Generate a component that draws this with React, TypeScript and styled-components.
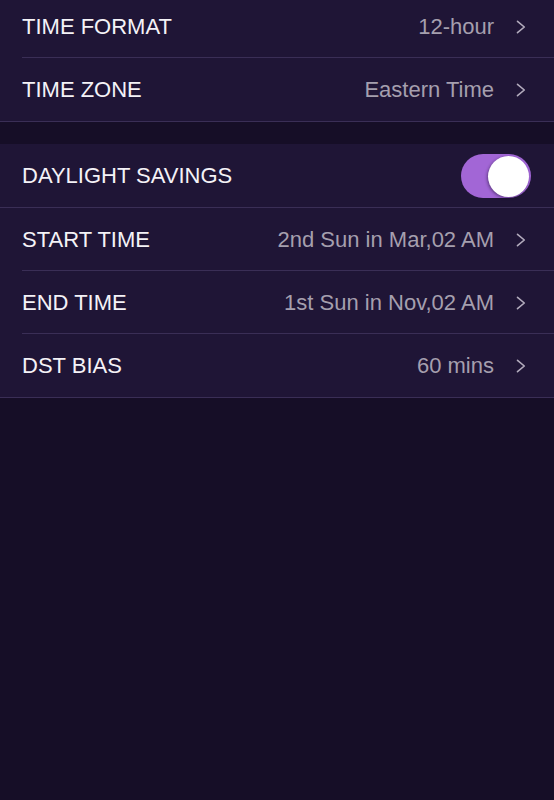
import React, { useState } from 'react';
import styled, { createGlobalStyle } from 'styled-components';

const GlobalStyle = createGlobalStyle`
  html, body {
    margin: 0;
    padding: 0;
    background: #160e27;
  }
  body {
    font-family: 'Liberation Sans', Arial, sans-serif;
    -webkit-font-smoothing: antialiased;
  }
`;

type Setting = {
  label: string;
  value?: string;
  toggle?: boolean;
  full?: boolean;
};

const timeSettings: Setting[] = [
  { label: 'TIME FORMAT', value: '12-hour' },
  { label: 'TIME ZONE', value: 'Eastern Time', full: true },
];

const dstSettings: Setting[] = [
  { label: 'DAYLIGHT SAVINGS', toggle: true, full: true },
  { label: 'START TIME', value: '2nd Sun in Mar,02 AM' },
  { label: 'END TIME', value: '1st Sun in Nov,02 AM' },
  { label: 'DST BIAS', value: '60 mins', full: true },
];

function Chevron() {
  return (
    <svg width="10" height="14" viewBox="0 0 10 14" fill="none">
      <path d="M1.5 1.3 L8.3 7 L1.5 12.7" stroke="#b3acbd" strokeWidth="1.6" strokeLinecap="round" strokeLinejoin="round" />
    </svg>
  );
}

export default function App() {
  const [dst, setDst] = useState(true);

  const renderRow = (item: Setting) => (
    <Row key={item.label} $full={item.full}>
      <Label>{item.label}</Label>
      {item.toggle ? (
        <Toggle $on={dst} onClick={() => setDst(!dst)}>
          <Knob $on={dst} />
        </Toggle>
      ) : (
        <Trailing>
          <Value>{item.value}</Value>
          <Chevron />
        </Trailing>
      )}
    </Row>
  );

  return (
    <Screen>
      <GlobalStyle />
      <Group>{timeSettings.map(renderRow)}</Group>
      <Group>{dstSettings.map(renderRow)}</Group>
    </Screen>
  );
}

// the list is scrolled a few pixels up, so the first row is cut at the top
const Screen = styled.main`
  margin-top: -5px;
  min-height: 805px;
  background: #160e27;
  display: flex;
  flex-direction: column;
  gap: 22px;
`;

const Group = styled.section`
  background: #1f1536;
  display: flex;
  flex-direction: column;
`;

const Row = styled.div<{ $full?: boolean }>`
  position: relative;
  height: ${(p) => (p.$full ? '64px' : '63px')};
  box-sizing: border-box;
  padding: 0 23px 0 22px;
  display: flex;
  align-items: center;
  justify-content: space-between;

  &::after {
    content: '';
    position: absolute;
    bottom: 0;
    right: 0;
    left: ${(p) => (p.$full ? '0' : '22px')};
    height: 1px;
    background: #3a2e56;
  }
`;

const Label = styled.span`
  color: #f4f2f7;
  font-size: 22px;
`;

const Trailing = styled.div`
  display: flex;
  align-items: center;
  gap: 22px;
  padding-right: 5px;
`;

const Value = styled.span`
  color: #a59fae;
  font-size: 22px;
`;

const Toggle = styled.button<{ $on: boolean }>`
  width: 70px;
  height: 44px;
  border-radius: 22px;
  border: none;
  padding: 0 2px;
  background: ${(p) => (p.$on ? '#a266d6' : '#3a2e56')};
  display: flex;
  align-items: center;
  justify-content: ${(p) => (p.$on ? 'flex-end' : 'flex-start')};
  cursor: pointer;
`;

const Knob = styled.span<{ $on: boolean }>`
  width: 41px;
  height: 41px;
  border-radius: 50%;
  background: #ffffff;
  box-shadow: -1px 1px 3px rgba(20, 10, 40, 0.45);
`;
